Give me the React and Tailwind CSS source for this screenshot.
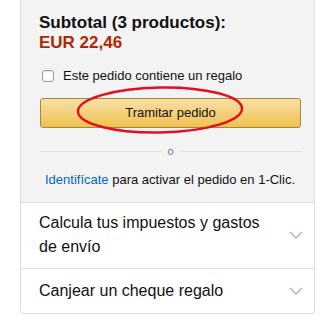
import React from "react";

function Chevron() {
  return (
    <svg width="14" height="8" viewBox="0 0 14 8" className="shrink-0">
      <path d="M1 1 L7 7 L13 1" fill="none" stroke="#b0b0b0" strokeWidth="1.3" />
    </svg>
  );
}

export default function App() {
  return (
    <div className="relative w-[320px] h-[330px] bg-white overflow-hidden" style={{ fontFamily: '"Liberation Sans", Arial, sans-serif' }}>
      <div className="ml-[20px] w-[295px] border-x border-b border-[#dddddd] rounded-b-[4px]">
        <div className="bg-[#f3f3f3] border-b border-[#dddddd] pl-[18px] pr-[13px] pt-[13px] pb-[13px]">
          <div className="text-[17px] leading-[20px] font-bold text-[#111111]">Subtotal (3 productos):</div>
          <div className="text-[17px] leading-[20px] font-bold text-[#b12704]">EUR 22,46</div>
          <div className="mt-[13px] flex items-center h-[20px] text-[13px] text-[#111111]">
            <span className="ml-[3px] w-[12px] h-[12px] rounded-[3px] border border-[#9a9a9a] bg-white shadow-[inset_0_1px_1px_rgba(0,0,0,0.1)]" />
            <span className="ml-[9px]">Este pedido contiene un regalo</span>
          </div>
          <div className="mt-[12px] ml-[1px] h-[30px] rounded-[3px] border border-[#a88734] bg-gradient-to-b from-[#f7dfa5] to-[#f0c14b] flex items-center justify-center text-[13px] text-[#111111]">
            Tramitar pedido
          </div>
          <div className="relative mt-[23px] ml-[1px] h-px bg-[#e3e3e3]">
            <span className="absolute left-1/2 -translate-x-1/2 -top-[8px] px-[6px] bg-[#f3f3f3] text-[11px] leading-[16px] text-[#767676]">o</span>
          </div>
          <div className="mt-[19px] text-center text-[13px] leading-[18px] text-[#111111]">
            <span className="text-[#0066c0]">Identifícate</span> para activar el pedido en 1-Clic.
          </div>
        </div>
        <div className="flex items-center justify-between border-b border-[#dddddd] pl-[18px] pr-[11px] pt-[8px] pb-[9px]">
          <div className="text-[16px] leading-[24px] text-[#111111]">Calcula tus impuestos y gastos<br />de envío</div>
          <Chevron />
        </div>
        <div className="flex items-center justify-between pl-[18px] pr-[11px] pt-[10px] pb-[10px]">
          <div className="text-[16px] leading-[24px] text-[#111111]">Canjear un cheque regalo</div>
          <Chevron />
        </div>
      </div>
      <svg className="absolute left-0 top-0 pointer-events-none" width="320" height="330">
        <ellipse cx="160" cy="110" rx="82" ry="22.5" fill="none" stroke="#e01020" strokeWidth="2.5" transform="rotate(-1 160 110)" />
      </svg>
    </div>
  );
}
